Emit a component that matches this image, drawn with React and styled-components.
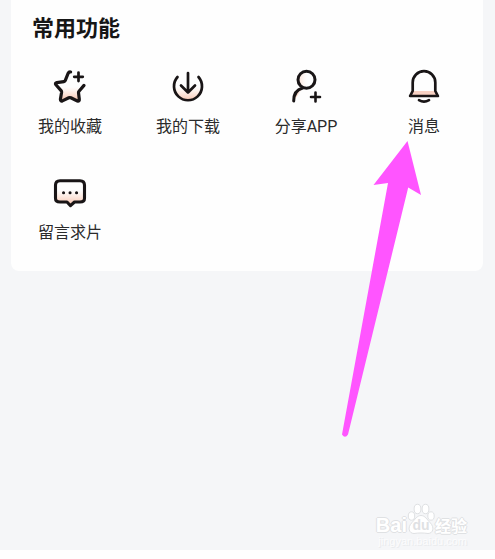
import React from "react";
import styled, { createGlobalStyle } from "styled-components";

const GlobalStyle = createGlobalStyle`
  *, *::before, *::after { box-sizing: border-box; }
  body {
    margin: 0;
    background: #fefefe;
    color: #1c1c1c;
    font-family: Roboto, "Noto Sans CJK SC", sans-serif;
  }
`;

const Page = styled.main`
  display: flex;
  flex-direction: column;
  justify-content: space-between;
  min-height: calc(100vh - 9px);
  padding: 0 12px 0 11px;
  background: #f5f6f8;
`;

const Card = styled.section`
  padding: 14px 0 26px;
  border-radius: 0 0 8px 8px;
  background: #fefefe;
`;

const Title = styled.h2`
  margin: 0 0 23px;
  padding-left: 21px;
  font-size: 22px;
  line-height: 30px;
  font-weight: 700;
  color: #161616;
`;

const Grid = styled.div`
  display: grid;
  grid-template-columns: repeat(4, 1fr);
  row-gap: 34px;
`;

const Cell = styled.div`
  position: relative;
`;

const Tile = styled.button`
  display: flex;
  flex-direction: column;
  align-items: center;
  gap: 8px;
  width: 100%;
  padding: 0;
  border: 0;
  background: none;
  color: #2b2b2b;
  font: inherit;
  font-size: 16px;
  line-height: 24px;
  white-space: nowrap;
  cursor: pointer;
`;

const Icon = styled.svg`
  display: block;
  width: 40px;
  height: 40px;
  fill: none;
  stroke: #191516;
  stroke-width: 3;
  stroke-linecap: round;
  stroke-linejoin: round;
`;

const Pointer = styled.svg`
  position: absolute;
  top: 73px;
  right: calc(50% + 3px);
  width: 80px;
  height: 298px;
  fill: #ff55ff;
  pointer-events: none;
`;

const Watermark = styled.footer`
  display: flex;
  flex-direction: column;
  align-items: flex-end;
  padding: 0 16px 3px 0;
  color: #ffffff;
`;

const Brand = styled.div`
  display: flex;
  align-items: flex-end;
  font-family: "Liberation Sans", sans-serif;
  font-size: 20px;
  line-height: 20px;
  font-weight: 700;
  text-shadow: 1px 0 #dfe1e3, -1px 0 #dfe1e3, 0 1px #dfe1e3, 0 -1px #dfe1e3;
`;

const Product = styled.span`
  font-family: "Noto Sans CJK SC", sans-serif;
  font-size: 16px;
`;

const Paw = styled.svg`
  width: 28px;
  height: 32px;
  fill: #ffffff;
  stroke: #dfe1e3;
  stroke-width: 1;
  font-size: 14px;
  text-shadow: none;
`;

const PawText = styled.text`
  fill: #dfe1e3;
  stroke: none;
`;

const Site = styled.span`
  color: #fcfcfd;
  font-family: "Liberation Sans", sans-serif;
  font-size: 11px;
  line-height: 12px;
  text-shadow: 1px 1px #e9ebed;
`;

function Glow({ id, from, to }) {
  return (
    <linearGradient id={id} x1="0" y1={from} x2="0" y2={to} gradientUnits="userSpaceOnUse">
      <stop offset="0" stopColor="#ffd9c8" stopOpacity="0" />
      <stop offset="1" stopColor="#f6c0aa" />
    </linearGradient>
  );
}

function StarIcon() {
  return (
    <Icon viewBox="0 0 40 40" aria-hidden="true">
      <defs><Glow id="star" from="20" to="33" /></defs>
      <path d="M15 15 6 17 12 23.5 11 33 20 30 29.5 33.5 28.6 24.5 34 18 27 15Z" fill="url(#star)" stroke="none" />
      <path d="M20.6 5q-1.7-.3-2.4 1.2l-3 7.4q-.4.9-1.3 1l-7.1 1q-2.2.5-.9 2.2l5.2 5.8q.6.7.5 1.6l-1.2 7.1q0 2.2 2 1.6l6.4-3.1q1-.5 2 0l6.6 3.2q2.1.6 1.9-1.7l-.8-6.5q-.1-.9.5-1.6l5-5.8" strokeWidth="3.2" />
      <path d="M28.5 5.5v8.6M24.2 9.8h8.6" strokeWidth="2.7" />
    </Icon>
  );
}

function DownloadIcon() {
  return (
    <Icon viewBox="0 0 40 40" aria-hidden="true">
      <defs><Glow id="download" from="20" to="34" /></defs>
      <path d="M6 19a14 14 0 0 0 28 0Z" fill="url(#download)" stroke="none" />
      <path d="M9.5 10a14 14 0 1 0 21 0M20 6v19.5M13 18.5l7 7 7-7" strokeWidth="2.7" />
    </Icon>
  );
}

function ShareIcon() {
  return (
    <Icon viewBox="0 0 40 40" aria-hidden="true">
      <defs>
        <linearGradient id="share" x1="9" y1="0" x2="22" y2="0" gradientUnits="userSpaceOnUse">
          <stop offset="0" stopColor="#f8d0be" />
          <stop offset="1" stopColor="#fff0e9" stopOpacity="0" />
        </linearGradient>
      </defs>
      <circle cx="20.5" cy="12.7" r="8.5" fill="url(#share)" />
      <path d="M7.7 34q-.2-10.5 9-13" fill="url(#share)" />
      <path d="M29.5 25.5v9M25 30h9" strokeWidth="2.6" />
    </Icon>
  );
}

function BellIcon() {
  return (
    <Icon viewBox="0 0 40 40" aria-hidden="true">
      <path d="M8.5 24h23l2.5 5H6Z" fill="#f8d1c3" stroke="none" />
      <path d="M8.7 24V15.5a11.3 11.3 0 0 1 22.6 0V24l2.6 5H6.1ZM15 33.2q5 3 10 0" strokeWidth="2.7" />
    </Icon>
  );
}

function CommentIcon() {
  return (
    <Icon viewBox="0 0 40 40" aria-hidden="true">
      <defs><Glow id="comment" from="17" to="32" /></defs>
      <path d="M10 7.8h20q4.5 0 4.5 4.5v13.2q0 3.5-4.5 3.5h-5.5L20.5 32.7 17 29h-7q-4.5 0-4.5-3.5V12.3q0-4.5 4.5-4.5Z" fill="url(#comment)" strokeWidth="3.1" />
      <path d="M13.5 19.7h.1M20 19.7h.1M26.5 19.7h.1" />
    </Icon>
  );
}

const features = [
  { label: "我的收藏", Glyph: StarIcon },
  { label: "我的下载", Glyph: DownloadIcon },
  { label: "分享APP", Glyph: ShareIcon },
  { label: "消息", Glyph: BellIcon, highlighted: true },
  { label: "留言求片", Glyph: CommentIcon },
];

export default function App() {
  return (
    <>
      <GlobalStyle />
      <Page>
        <Card>
          <Title>常用功能</Title>
          <Grid>
            {features.map(({ label, Glyph, highlighted }) => (
              <Cell key={label}>
                <Tile type="button">
                  <Glyph />
                  {label}
                </Tile>
                {highlighted && (
                  <Pointer viewBox="0 0 80 298" aria-hidden="true">
                    <path d="M66.5 1 80 55 67.2 47.5 7 294.5Q4 299 1 294.5L47 43 32.5 45Z" />
                  </Pointer>
                )}
              </Cell>
            ))}
          </Grid>
        </Card>
        <Watermark>
          <Brand>
            Bai
            <Paw viewBox="0 0 28 32" aria-hidden="true">
              <ellipse cx="4.5" cy="13" rx="3.2" ry="4.2" />
              <ellipse cx="10.5" cy="6" rx="3.4" ry="4.7" />
              <ellipse cx="18.5" cy="6" rx="3.4" ry="4.7" />
              <ellipse cx="24" cy="13" rx="3.2" ry="4.2" />
              <path d="M14 12.5c4 0 6 4 9 7 5 5 3 11-2 11-5-.7-9-.7-14 0-5 0-7-6-2-11 3-3 5-7 9-7Z" />
              <PawText x="14" y="27" textAnchor="middle">du</PawText>
            </Paw>
            <Product>经验</Product>
          </Brand>
          <Site>jingyan.baidu.com</Site>
        </Watermark>
      </Page>
    </>
  );
}
